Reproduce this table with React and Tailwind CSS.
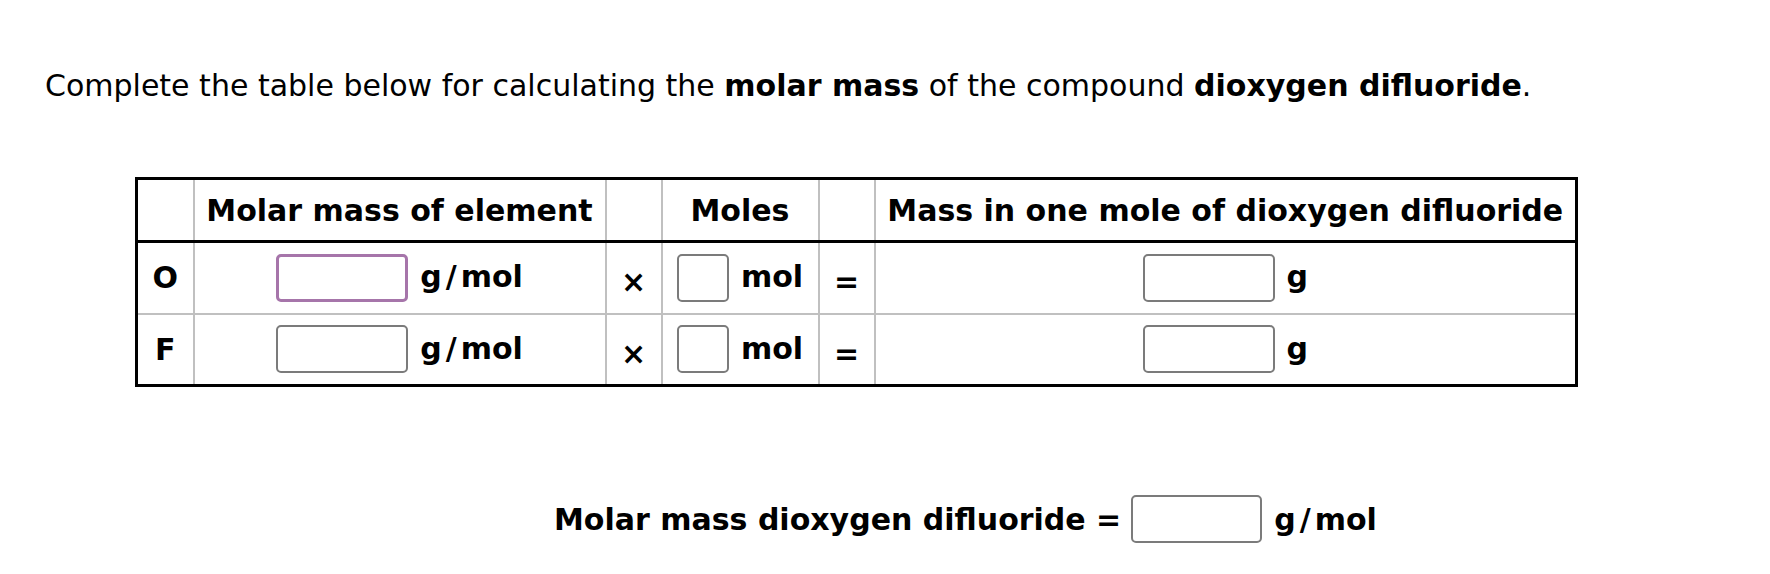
import React from 'react';

const Field = ({ w = 'w-[132px]', focused = false }) => (
    <input
        type="text"
        aria-label="answer"
        className={
            focused
                ? `${w} h-[48px] rounded-[5px] border-[3px] border-[#a675aa] bg-white outline-none`
                : `${w} h-[48px] rounded-[5px] border-2 border-[#7b7b7b] bg-white outline-none`
        }
    />
);

// Verdana draws the slash with more room than DejaVu does
const GPerMol = () => (
    <span className="pb-[2px]">
        g<span className="mx-[4px]">/</span>mol
    </span>
);

const rows = [
    { el: 'O', focused: true },
    { el: 'F', focused: false },
];

const App = () => {
    return (
        <div className="min-h-screen bg-white text-black font-['DejaVu_Sans',sans-serif] text-[30px]">
            {/* Prompt */}
            <p className="pt-[68px] pl-[45px] leading-[35px]">
                Complete the table below for calculating the <b>molar mass</b> of the compound{' '}
                <b>dioxygen difluoride</b>.
            </p>

            {/* Table */}
            <table className="mt-[74px] ml-[135px] w-[1440px] table-fixed border-collapse border-[3px] border-black font-bold">
                <colgroup>
                    <col className="w-[57px]" />
                    <col className="w-[412px]" />
                    <col className="w-[56px]" />
                    <col className="w-[157px]" />
                    <col className="w-[56px]" />
                    <col className="w-[702px]" />
                </colgroup>
                <thead>
                    <tr className="h-[63px]">
                        <th className="border-2 border-[#c0c0c0] border-b-[3px] border-b-black"></th>
                        <th className="border-2 border-[#c0c0c0] border-b-[3px] border-b-black text-center">Molar mass of element</th>
                        <th className="border-2 border-[#c0c0c0] border-b-[3px] border-b-black"></th>
                        <th className="border-2 border-[#c0c0c0] border-b-[3px] border-b-black text-center">Moles</th>
                        <th className="border-2 border-[#c0c0c0] border-b-[3px] border-b-black"></th>
                        <th className="border-2 border-[#c0c0c0] border-b-[3px] border-b-black text-center whitespace-nowrap">Mass in one mole of dioxygen difluoride</th>
                    </tr>
                </thead>
                <tbody>
                    {rows.map((r) => (
                        <tr key={r.el} className="h-[72px]">
                            <td className="border-2 border-[#c0c0c0] text-center">{r.el}</td>
                            <td className="border-2 border-[#c0c0c0]">
                                <div className="flex items-center justify-center gap-3">
                                    <Field focused={r.focused} />
                                    <GPerMol />
                                </div>
                            </td>
                            <td className="border-2 border-[#c0c0c0] text-center">
                                <span className="relative top-[4px]">×</span>
                            </td>
                            <td className="border-2 border-[#c0c0c0]">
                                <div className="flex items-center justify-center gap-3">
                                    <Field w="w-[52px]" />
                                    <span className="pb-[2px]">mol</span>
                                </div>
                            </td>
                            <td className="border-2 border-[#c0c0c0] text-center">
                                <span className="relative top-[4px]">=</span>
                            </td>
                            <td className="border-2 border-[#c0c0c0]">
                                <div className="flex items-center justify-center gap-3">
                                    <Field />
                                    <span className="pb-[2px]">g</span>
                                </div>
                            </td>
                        </tr>
                    ))}
                </tbody>
            </table>

            {/* Total */}
            <div className="mt-[108px] pl-[554px] flex items-center font-bold">
                <span>Molar mass dioxygen difluoride =</span>
                <span className="ml-[10px]"><Field w="w-[131px]" /></span>
                <span className="ml-[12px]"><GPerMol /></span>
            </div>
        </div>
    );
};

export default App;
